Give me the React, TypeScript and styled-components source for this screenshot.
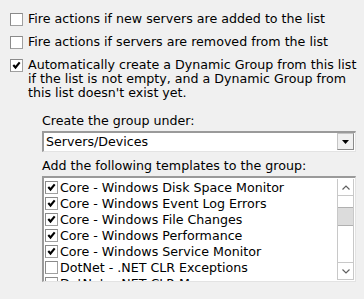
import React from "react";
import styled, { createGlobalStyle } from "styled-components";

const GlobalStyle = createGlobalStyle`
  html, body {
    margin: 0;
    padding: 0;
    background: #f0f0f0;
  }
  body {
    font-family: "DejaVu Sans", Tahoma, sans-serif;
    font-size: 12.65px;
    color: #000000;
  }
`;

const Page = styled.div`
  width: 364px;
  height: 299px;
  overflow: hidden;
  padding: 12px 0 0 10px;
  box-sizing: border-box;
`;

const OptionRow = styled.label`
  display: flex;
  align-items: flex-start;
  gap: 5px;
  margin-bottom: 9px;
  line-height: 14px;
`;

const Box = styled.span`
  flex: none;
  display: inline-flex;
  align-items: center;
  justify-content: center;
  width: 11px;
  height: 11px;
  margin-top: 1px;
  background: #ffffff;
  border: 1px solid #a0a0a0;
  border-top-color: #8a8a8a;
  border-left-color: #8a8a8a;
`;

const CheckIcon = () => (
  <svg width="9" height="9" viewBox="0 0 9 9">
    <polyline
      points="1.3 4 3.5 6.5 7.7 1.3"
      fill="none"
      stroke="#000"
      strokeWidth="2.1"
    />
  </svg>
);

const Section = styled.div`
  margin: 13px 0 0 32px;
  width: 314px;
`;

const FieldLabel = styled.div`
  line-height: 15px;
  margin-bottom: 3px;
  white-space: nowrap;
`;

const Sunken = styled.div`
  box-sizing: border-box;
  border-top: 2px solid #9a9a9a;
  border-left: 2px solid #9a9a9a;
  border-right: 1px solid #e3e3e3;
  border-bottom: 1px solid #e3e3e3;
  background: #ffffff;
`;

const Select = styled(Sunken)`
  display: flex;
  align-items: stretch;
  height: 21px;
  margin-bottom: 6px;
`;

const SelectValue = styled.div`
  flex: 1;
  padding-left: 2px;
  line-height: 18px;
`;

const ArrowButton = styled.div`
  width: 15px;
  display: flex;
  align-items: center;
  justify-content: center;
  background: #f0f0f0;
  border: 1px solid #c4c4c4;
  border-right-color: #8a8a8a;
  border-bottom-color: #8a8a8a;
  margin: 0 1px 1px 0;
`;

const ListBox = styled(Sunken)`
  display: flex;
  height: 106px;
  overflow: hidden;
`;

const Items = styled.div`
  flex: 1;
  padding: 1px 0 0 1px;
`;

const Item = styled.div`
  display: flex;
  align-items: center;
  gap: 2px;
  height: 16px;
  white-space: nowrap;
`;

const ScrollBar = styled.div`
  width: 17px;
  display: flex;
  flex-direction: column;
  border-left: 1px solid #c8c8c8;
  border-right: 1px solid #c8c8c8;
  box-sizing: border-box;
  margin: 1px 1px 1px 0;
`;

const ScrollButton = styled.div<{ $first?: boolean }>`
  height: 16px;
  display: flex;
  align-items: center;
  justify-content: center;
  border-top: ${(p) => (p.$first ? "none" : "1px solid #c8c8c8")};
  border-bottom: 1px solid #c8c8c8;
`;

const Track = styled.div`
  flex: 1;
  padding-top: 11px;
`;

const Thumb = styled.div`
  height: 17px;
  background: #dcdcdc;
  border-top: 1px solid #b0b0b0;
  border-bottom: 1px solid #b0b0b0;
`;

const templates = [
  { name: "Core - Windows Disk Space Monitor", checked: true },
  { name: "Core - Windows Event Log Errors", checked: true },
  { name: "Core - Windows File Changes", checked: true },
  { name: "Core - Windows Performance", checked: true },
  { name: "Core - Windows Service Monitor", checked: true },
  { name: "DotNet - .NET CLR Exceptions", checked: false },
  { name: "DotNet - .NET CLR Memory", checked: false },
];

export default function App() {
  return (
    <>
      <GlobalStyle />
      <Page>
        <OptionRow>
          <Box />
          <span>Fire actions if new servers are added to the list</span>
        </OptionRow>
        <OptionRow>
          <Box />
          <span>Fire actions if servers are removed from the list</span>
        </OptionRow>
        <OptionRow>
          <Box>
            <CheckIcon />
          </Box>
          <span>
            Automatically create a Dynamic Group from this list
            <br />
            if the list is not empty, and a Dynamic Group from
            <br />
            this list doesn't exist yet.
          </span>
        </OptionRow>

        <Section>
          <FieldLabel>Create the group under:</FieldLabel>
          <Select>
            <SelectValue>Servers/Devices</SelectValue>
            <ArrowButton>
              <svg width="7" height="4" viewBox="0 0 7 4">
                <polygon points="0 0 7 0 3.5 4" fill="#000" />
              </svg>
            </ArrowButton>
          </Select>

          <FieldLabel>Add the following templates to the group:</FieldLabel>
          <ListBox>
            <Items>
              {templates.map((t) => (
                <Item key={t.name}>
                  <Box>{t.checked && <CheckIcon />}</Box>
                  <span>{t.name}</span>
                </Item>
              ))}
            </Items>
            <ScrollBar>
              <ScrollButton $first>
                <svg width="8" height="5" viewBox="0 0 8 5">
                  <polyline points="0.5 4.5 4 1 7.5 4.5" fill="none" stroke="#606060" strokeWidth="1.2" />
                </svg>
              </ScrollButton>
              <Track>
                <Thumb />
              </Track>
              <ScrollButton>
                <svg width="8" height="5" viewBox="0 0 8 5">
                  <polyline points="0.5 0.5 4 4 7.5 0.5" fill="none" stroke="#606060" strokeWidth="1.2" />
                </svg>
              </ScrollButton>
            </ScrollBar>
          </ListBox>
        </Section>
      </Page>
    </>
  );
}
